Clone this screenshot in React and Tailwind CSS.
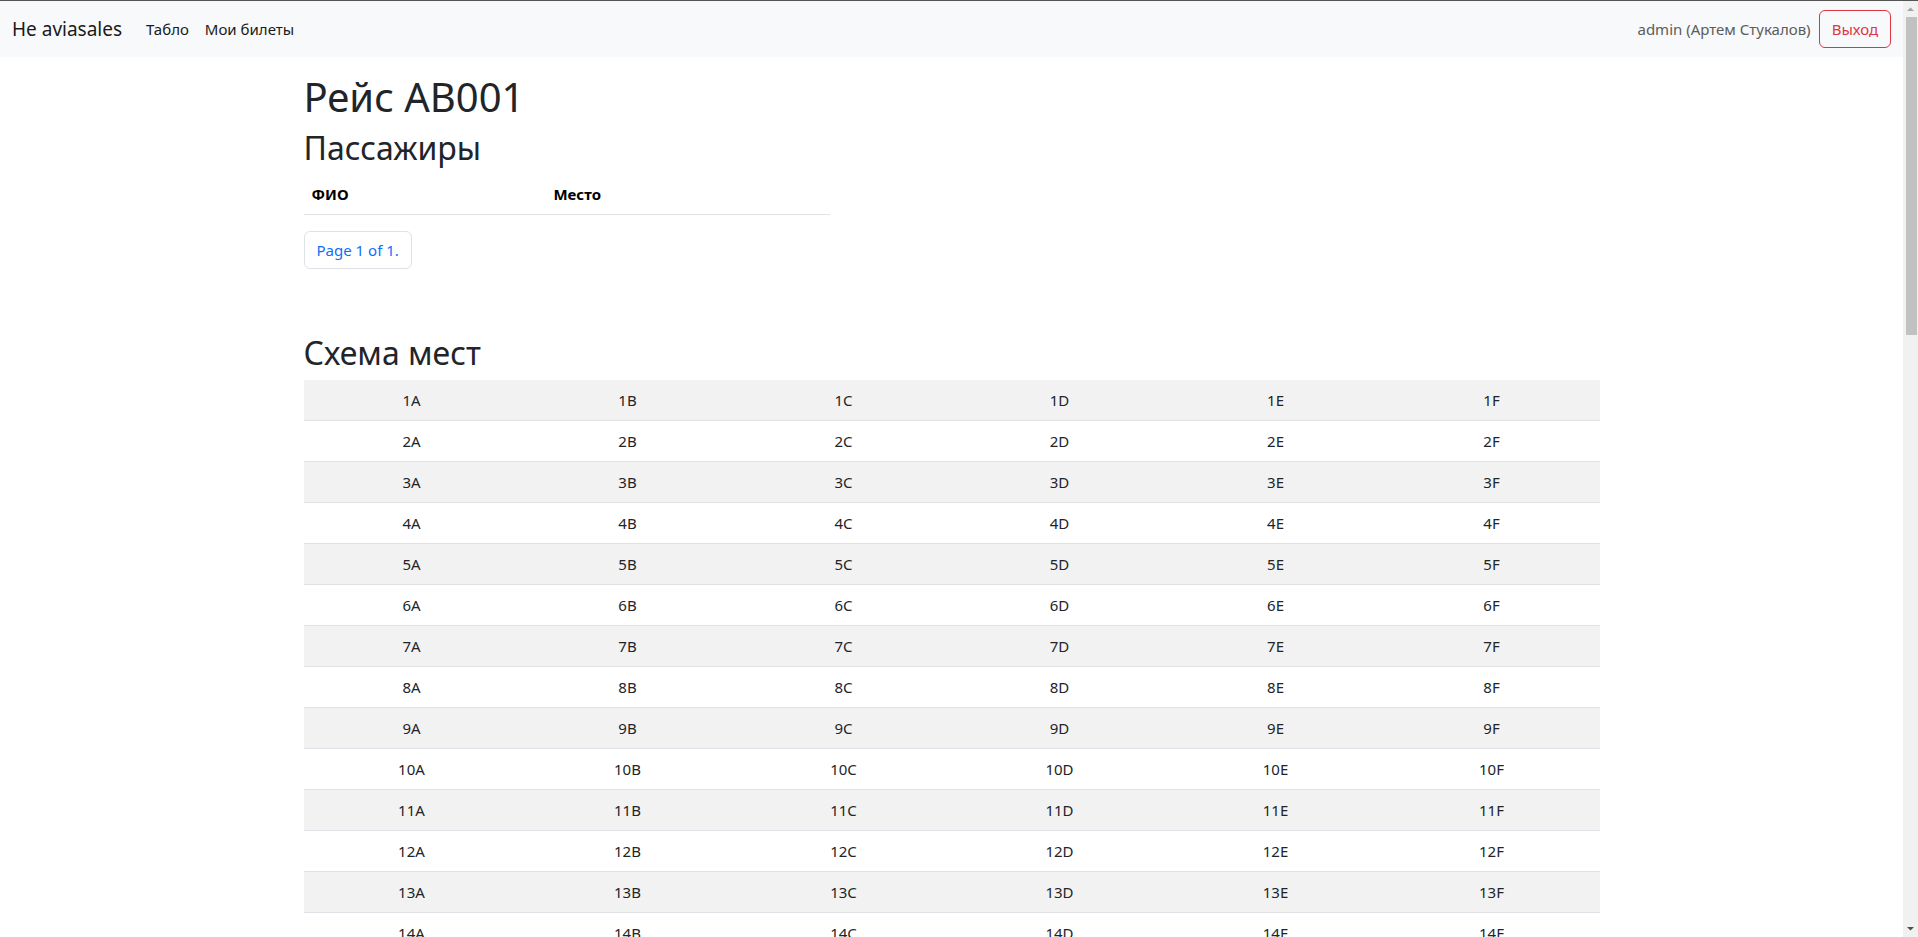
import React from 'react';

const letters = ['A', 'B', 'C', 'D', 'E', 'F'];
const rows = Array.from({ length: 30 }, (_, i) => i + 1);

export default function App() {
  return (
    <div className="h-screen flex overflow-hidden border-t border-[#555] bg-white text-[#212529] font-['Noto_Sans',sans-serif]">
      <div className="flex-1 min-w-0 overflow-hidden">
        <nav className="h-[56px] bg-[#f8f9fa] flex items-center justify-between px-3">
          <div className="flex items-center">
            <a className="text-[19px] text-[#1a1a1a] mr-4 py-[5px]">He aviasales</a>
            <a className="text-[15px] text-[#1a1a1a] px-2 py-2">Табло</a>
            <a className="text-[15px] text-[#1a1a1a] px-2 py-2">Мои билеты</a>
          </div>
          <div className="flex items-center">
            <span className="text-[15px] text-[#5c5c5c] mr-2">admin (Артем Стукалов)</span>
            <button className="h-[38px] px-3 text-[15px] text-[#dc3545] border border-[#dc3545] rounded-md">
              Выход
            </button>
          </div>
        </nav>

        <main className="mx-auto w-[1320px] px-3 pt-4">
          <h1 className="text-[40px] leading-[1.2] font-normal mb-2">Рейс AB001</h1>
          <h2 className="text-[32px] leading-[1.2] font-normal mb-2">Пассажиры</h2>

          <div className="w-[526px]">
            <table className="w-full mb-4 border-collapse">
              <thead>
                <tr className="border-b border-[#dee2e6]">
                  <th className="text-left text-[15px] font-bold text-black p-2 w-[46%]">ФИО</th>
                  <th className="text-left text-[15px] font-bold text-black p-2">Место</th>
                </tr>
              </thead>
            </table>
          </div>

          <div className="flex mt-px">
            <a className="block h-[38px] leading-[36px] px-3 text-[15px] text-[#0d6efd] border border-[#dee2e6] rounded-md">
              Page 1 of 1.
            </a>
          </div>

          <h2 className="text-[32px] leading-[1.2] font-normal mt-[65px] mb-2">Схема мест</h2>
          <table className="w-full border-collapse table-fixed mb-4">
            <tbody>
              {rows.map((r) => (
                <tr key={r} className={`border-b border-[#dee2e6] ${r % 2 === 1 ? 'bg-[#f2f2f2]' : 'bg-white'}`}>
                  {letters.map((l) => (
                    <td key={l} className="text-center text-[15px] leading-6 p-2">
                      {r}{l}
                    </td>
                  ))}
                </tr>
              ))}
            </tbody>
          </table>
        </main>
      </div>

      {/* page scrollbar */}
      <div className="w-[15px] shrink-0 bg-[#f1f1f1] flex flex-col items-center">
        <svg width="15" height="16" viewBox="0 0 15 16" className="shrink-0">
          <path d="M4 10 L7.5 6.5 L11 10 Z" fill="#a3a3a3" />
        </svg>
        <div className="w-[11px] h-[318px] ml-[2px] bg-[#c1c1c1]" />
        <div className="flex-1" />
        <svg width="15" height="16" viewBox="0 0 15 16" className="shrink-0">
          <path d="M4 6 L7.5 9.5 L11 6 Z" fill="#505050" />
        </svg>
      </div>
    </div>
  );
}
